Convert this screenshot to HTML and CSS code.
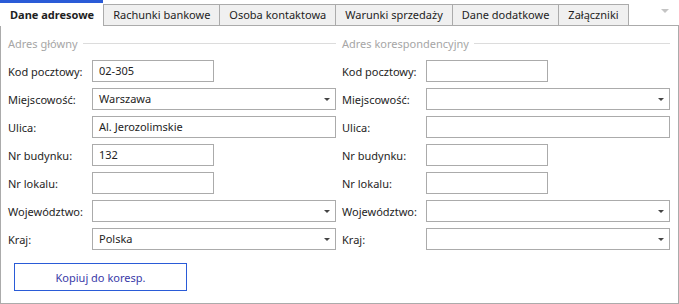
FILE: index.html
```html
<!DOCTYPE html>
<html lang="pl">
<head>
<meta charset="UTF-8" />
<title>Dane adresowe</title>
<link rel="stylesheet" href="styles.css">
</head>
<body>

<div class="tabs">
  <div class="tab active">Dane adresowe</div>
  <div class="tab">Rachunki bankowe</div>
  <div class="tab">Osoba kontaktowa</div>
  <div class="tab">Warunki sprzedaży</div>
  <div class="tab">Dane dodatkowe</div>
  <div class="tab">Załączniki</div>
  <div class="tab-rest"><span class="tab-menu"></span></div>
</div>

<div class="panel">
  <!-- Adres główny -->
  <div class="section">
    <div class="section-title"><span>Adres główny</span></div>
    <div class="row"><label>Kod pocztowy:</label><div class="field short">02-305</div></div>
    <div class="row"><label>Miejscowość:</label><div class="field long combo">Warszawa</div></div>
    <div class="row"><label>Ulica:</label><div class="field long">Al. Jerozolimskie</div></div>
    <div class="row"><label>Nr budynku:</label><div class="field short">132</div></div>
    <div class="row"><label>Nr lokalu:</label><div class="field short"></div></div>
    <div class="row"><label>Województwo:</label><div class="field long combo"></div></div>
    <div class="row"><label>Kraj:</label><div class="field long combo">Polska</div></div>
    <button class="copy-btn">Kopiuj do koresp.</button>
  </div>

  <!-- Adres korespondencyjny -->
  <div class="section">
    <div class="section-title"><span>Adres korespondencyjny</span></div>
    <div class="row"><label>Kod pocztowy:</label><div class="field short"></div></div>
    <div class="row"><label>Miejscowość:</label><div class="field long combo"></div></div>
    <div class="row"><label>Ulica:</label><div class="field long"></div></div>
    <div class="row"><label>Nr budynku:</label><div class="field short"></div></div>
    <div class="row"><label>Nr lokalu:</label><div class="field short"></div></div>
    <div class="row"><label>Województwo:</label><div class="field long combo"></div></div>
    <div class="row"><label>Kraj:</label><div class="field long combo"></div></div>
  </div>
</div>

</body>
</html>
```

FILE: styles.css
```css
:root {
  --border: #ababab;
  --text: #1e1e1e;
  --muted: #a6a6a6;
  --accent: #2a5bd7;
}
body {
  margin: 0;
  width: 679px;
  font-family: "Noto Sans", "Open Sans", sans-serif;
  font-size: 11px;
  color: var(--text);
  background: #fff;
}

/* Tab strip */
.tabs {
  display: flex;
  height: 26px;
}
.tab {
  box-sizing: border-box;
  height: 22px;
  margin-top: 4px;
  padding: 0 9px;
  line-height: 20px;
  background: #f0f0f0;
  border: 1px solid var(--border);
  border-left: none;
  white-space: nowrap;
}
.tab.active {
  height: 26px;
  margin-top: 0;
  padding: 0 9px 0 10px;
  line-height: 23px;
  background: #fff;
  font-weight: bold;
  border: none;
  border-top: 3px solid var(--accent);
}
.tab.active + .tab {
  border-left: 1px solid var(--border);
}
.tab-rest {
  flex: 1;
  border-bottom: 1px solid var(--border);
  display: flex;
  justify-content: flex-end;
  padding: 9px 10px 0 0;
}
.tab-menu {
  width: 0;
  height: 0;
  border-left: 4px solid transparent;
  border-right: 4px solid transparent;
  border-top: 4px solid #c4c4c4;
}

/* Content panel */
.panel {
  box-sizing: border-box;
  height: 278px;
  border: 1px solid var(--border);
  border-top: none;
  display: grid;
  grid-template-columns: 328px 328px;
  column-gap: 6px;
  padding: 0 0 0 7px;
}
.section-title {
  display: flex;
  align-items: center;
  gap: 5px;
  height: 34px;
  color: var(--muted);
}
.section-title::after {
  content: "";
  flex: 1;
  border-top: 1px solid #dcdcdc;
}
.row {
  display: flex;
  align-items: center;
  height: 22px;
  margin-bottom: 6px;
}
.row label {
  width: 84px;
  flex: none;
}
.field {
  box-sizing: border-box;
  height: 22px;
  border: 1px solid var(--border);
  padding: 0 6px;
  line-height: 20px;
  position: relative;
}
.field.short { width: 122px; }
.field.long { width: 244px; }
.field.combo::after {
  content: "";
  position: absolute;
  right: 5px;
  top: 9px;
  border-left: 3px solid transparent;
  border-right: 3px solid transparent;
  border-top: 3px solid #444;
}

.copy-btn {
  display: block;
  margin: 13px 0 0 6px;
  width: 173px;
  height: 28px;
  background: #fff;
  border: 1px solid var(--accent);
  font-family: inherit;
  font-size: 11px;
  color: #3a3aa8;
}
```
